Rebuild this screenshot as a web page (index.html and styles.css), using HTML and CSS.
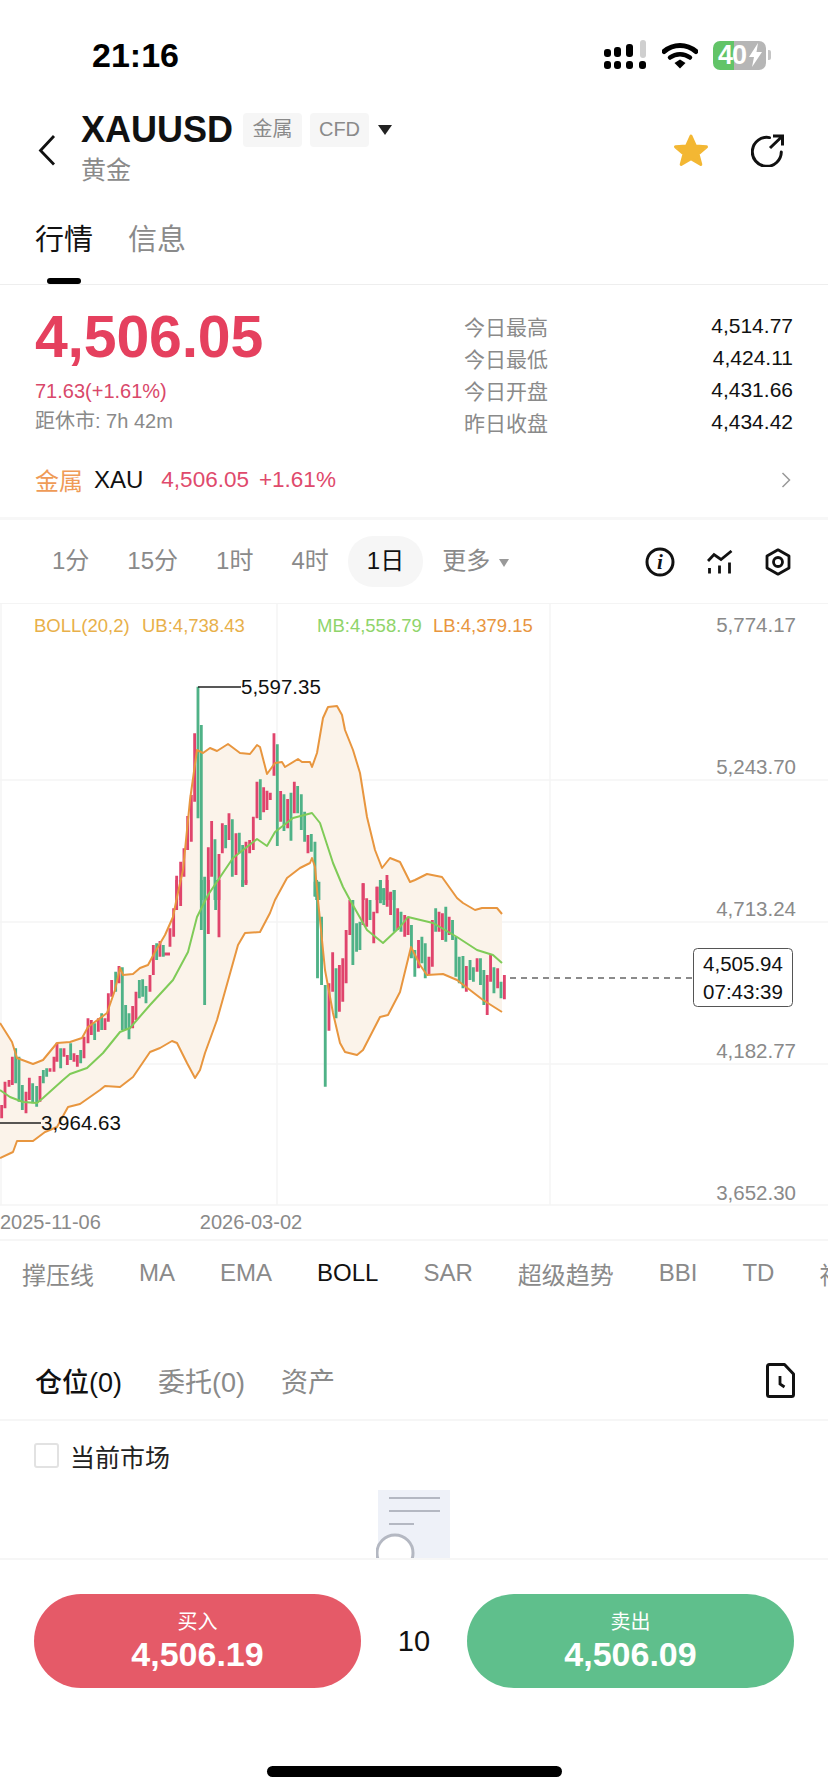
FILE: index.html
```html
<!DOCTYPE html>
<html lang="zh-CN">
<head>
    <meta charset="UTF-8">
    <meta name="viewport" content="width=device-width, initial-scale=1.0">
    <title>XAUUSD 黄金</title>
    <link rel="stylesheet" href="styles.css">
</head>
<body>
<div class="phone">
    <div class="status">
        <span class="time">21:16</span>
        <div class="status-icons">
            <svg class="signal" width="44" height="30" viewBox="0 0 44 30">
                <rect x="1" y="9" width="7" height="8" rx="3" fill="#000"/>
                <rect x="11" y="7" width="7" height="10" rx="3" fill="#000"/>
                <rect x="23" y="4" width="7" height="13" rx="3" fill="#000"/>
                <rect x="37" y="0" width="6" height="18" rx="3" fill="#cfcfcf"/>
                <rect x="1" y="21" width="7" height="8" rx="3" fill="#000"/>
                <rect x="11" y="21" width="7" height="8" rx="3" fill="#000"/>
                <rect x="23" y="21" width="7" height="8" rx="3" fill="#000"/>
                <rect x="36" y="21" width="7" height="8" rx="3" fill="#000"/>
            </svg>
            <svg class="wifi" width="36" height="27" viewBox="0 0 36 27">
                <path d="M2 9.5C11.500 1.500 24.500 1.500 34 9.500" fill="none" stroke="#000" stroke-width="5" stroke-linecap="round"/>
                <path d="M8 15.500C14 11 22 11 28 15.500" fill="none" stroke="#000" stroke-width="4.500" stroke-linecap="round"/>
                <path d="M12.500 21L18 17.500L23.500 21L18 26.500Z" fill="#000"/>
            </svg>
            <div class="battery">
                <span>40</span>
                <svg width="13" height="24" viewBox="0 0 13 24"><path d="M9 0L0 14H5L3 24L13 9H7.500Z" fill="#fff"/></svg>
            </div>
            <i class="battery-nub"></i>
        </div>
    </div>

    <div class="header">
        <svg class="back" width="18" height="32" viewBox="0 0 18 32">
            <path d="M16 2L2.500 16.500L16 30.500" fill="none" stroke="#111" stroke-width="2.800"/>
        </svg>
        <div class="title-col">
            <div class="title-row">
                <span class="symbol">XAUUSD</span>
                <span class="tag">金属</span>
                <span class="tag">CFD</span>
                <i class="caret"></i>
            </div>
            <div class="subtitle">黄金</div>
        </div>
        <div class="header-icons">
            <svg width="38" height="34" viewBox="0 0 38 34">
                <path d="M19 3L23.500 13L34.500 13.800L26 21L28.800 31.500L19 25.800L9.200 31.500L12 21L3.500 13.800L14.500 13Z" fill="#f3b733" stroke="#f3b733" stroke-width="3" stroke-linejoin="round"/>
            </svg>
            <svg width="33" height="33" viewBox="0 0 33 33">
                <path d="M18.500 3.600A14.500 14.500 0 1 0 30.300 18" fill="none" stroke="#111" stroke-width="3" stroke-linecap="round"/>
                <path d="M19 14L31 2.500M22 2H31.500V11.500" fill="none" stroke="#111" stroke-width="3"/>
            </svg>
        </div>
    </div>

    <div class="tabs">
        <div class="tab-list">
            <span class="tab tab-on">行情</span>
            <span class="tab">信息</span>
        </div>
        <div class="tab-mark"></div>
    </div>

    <div class="quote">
        <div class="quote-main">
            <div class="last-price">4,506.05</div>
            <div class="change">71.63(+1.61%)</div>
            <div class="countdown">距休市: 7h 42m</div>
        </div>
        <div class="stats">
            <div class="stat"><span class="stat-label">今日最高</span><span class="stat-value">4,514.77</span></div>
            <div class="stat"><span class="stat-label">今日最低</span><span class="stat-value">4,424.11</span></div>
            <div class="stat"><span class="stat-label">今日开盘</span><span class="stat-value">4,431.66</span></div>
            <div class="stat"><span class="stat-label">昨日收盘</span><span class="stat-value">4,434.42</span></div>
        </div>
    </div>

    <div class="metal">
        <span class="metal-name">金属</span>
        <span class="metal-code">XAU</span>
        <span class="metal-price">4,506.05</span>
        <span class="metal-pct">+1.61%</span>
        <svg class="metal-arrow" width="10" height="16" viewBox="0 0 10 16">
            <path d="M1.500 1L8.500 8L1.500 15" fill="none" stroke="#999" stroke-width="1.500"/>
        </svg>
    </div>

    <div class="periods">
        <span class="period">1分</span>
        <span class="period">15分</span>
        <span class="period">1时</span>
        <span class="period">4时</span>
        <span class="period period-on">1日</span>
        <span class="period period-more">更多<i class="more-caret"></i></span>
        <div class="tools">
            <svg width="30" height="30" viewBox="0 0 30 30">
                <circle cx="15" cy="15" r="13" fill="none" stroke="#111" stroke-width="3"/>
                <text class="info-i" x="15" y="22" text-anchor="middle">i</text>
            </svg>
            <svg width="26" height="24" viewBox="0 0 26 24">
                <path d="M1 11L7 4.500L14 9.500L24.500 1" fill="none" stroke="#111" stroke-width="2.800"/>
                <path d="M2.500 18V23.500M12.500 15.500V23.500M22.500 12.500V23.500" fill="none" stroke="#111" stroke-width="2.800"/>
            </svg>
            <svg width="26" height="28" viewBox="0 0 26 28">
                <path d="M13 1.800L24 8V20L13 26.200L2 20V8Z" fill="none" stroke="#111" stroke-width="2.800" stroke-linejoin="round"/>
                <circle cx="13" cy="14" r="4.500" fill="none" stroke="#111" stroke-width="2.800"/>
            </svg>
        </div>
    </div>

    <svg class="chart" width="828" height="602" viewBox="0 604 828 602">
        <!-- grid -->
        <path class="grid" d="M0 780H828M0 922H828M0 1064H828M0 1205H828M1 604V1205M277 604V1205M550 604V1205"/>
        <text class="watermark" x="325" y="942">Gate</text>

        <!-- bollinger band -->
        <path class="band" d="M0 1023L12 1042L17 1058L33 1064L43 1060L57 1043L70 1042L82 1038L88 1027L107 1013L115 990L120 968L123 975L133 974L140 968L148 965L155 952L165 935L173 917L177 897L183 870L190 800L197 750L203 753L210 748L217 751L228 744L240 753L250 754L257 745L260 747L267 774L275 763L282 762L285 767L298 759L302 762L310 762L312 767L317 753L323 718L328 707L337 706L342 715L345 730L353 750L360 773L367 817L375 850L382 868L390 858L400 862L410 882L415 880L427 874L442 877L457 898L463 903L475 910L482 908L497 908L502 914L502 1012L483 1000L470 990L457 980L443 974L427 975L420 965L411 947L400 992L388 1015L380 1017L363 1050L357 1055L345 1052L340 1043L333 1013L325 970L318 900L315 867L312 858L310 863L300 868L287 878L275 900L270 913L260 932L245 933L238 945L217 1020L205 1053L200 1070L195 1078L187 1063L177 1043L172 1041L160 1048L150 1052L133 1077L120 1087L105 1086L100 1090L80 1104L68 1107L57 1127L45 1132L33 1141L17 1141L13 1152L0 1158Z"/>

        <!-- candles below y 880, left part -->
        <g transform="translate(0,880) scale(.3333)">
            <path class="up" d="M5 675V715M15 605V685M27 600V620M37 530V615M78 635V700M88 593V660M120 588V665M150 565V575M162 530V575M171 488V545M192 505V530M202 525V555M222 520V545M232 525V560M252 470V535M264 415V490M274 420V465M295 415V455M315 415V450M325 340V425M335 300V350M357 258V310M398 378V445M408 335V420M450 285V335M460 195V285M480 183V230M492 222H510M510 145V200M521 85V170M530 0V90M542 0V78M625 0V162M657 0V172M738 0V15"/>
            <path class="down" d="M47 505V610M57 530V665M67 615V690M98 610V670M110 618V680M130 570V610M140 565V590M182 505V565M212 490V540M242 510V550M284 430V480M305 400V450M347 275V335M367 262V450M377 375V450M387 400V478M418 300V355M428 298V350M438 318V370M470 190V240M490 195V230M604 0V150M614 60V375M647 0V90M728 0V20"/>
        </g>
        <!-- candles above y 900 -->
        <g transform="translate(0,650) scale(.3333)">
            <path class="up" d="M530 677V750M542 635V750M552 595V680M563 498V600M574 435V575M584 250V455M625 592V750M635 513V680M657 612V750M667 520V610M687 490V570M708 550V675M738 575V700M749 570V610M760 500V600M771 395V505M791 412V487M801 422V480M811 428V450M822 250V377M842 423V515M863 447V535M883 395V490M924 555V610M1090 700V750M1131 710V750M1161 675V750M1171 730V750"/>
            <path class="down" d="M594 110V505M604 225V750M614 680V750M645 568V750M677 525V595M697 508V680M718 548V610M728 585V710M781 388V510M832 283V588M852 433V543M873 428V572M893 408V490M904 433V540M914 485V575M934 552V605M945 575V740M950 690V750M957 695V750M1141 690V750M1151 715V750M1182 720V750"/>
        </g>
        <!-- candles below y 880, right part -->
        <g transform="translate(300,880) scale(.3367,.3333)">
            <path class="up" d="M86 310V452M97 217V335M117 255V395M127 235V365M137 150V310M148 60V165M187 10V135M198 55V140M219 95V190M229 20V100M259 0V80M269 35V105M290 85V150M311 105V170M321 110V165M352 180V265M383 230V285M393 120V260M413 95V155M423 100V180M443 110V165M494 258V335M526 235V275M556 285V405M566 222V305M587 265V325M607 285V358"/>
            <path class="down" d="M45 5V48M52 5V295M64 110V315M75 315V620M107 265V415M157 60V255M168 130V215M178 125V210M208 60V120M239 0V70M249 25V75M280 30V155M300 95V155M331 135V235M341 210V290M362 170V250M372 190V295M403 85V155M433 80V185M453 120V180M463 170V290M473 230V310M484 228V325M505 240V300M515 262V305M536 235V315M546 270V375M576 262V340M597 305V355"/>
        </g>

        <!-- band lines -->
        <path class="band-line" d="M0 1023L12 1042L17 1058L33 1064L43 1060L57 1043L70 1042L82 1038L88 1027L107 1013L115 990L120 968L123 975L133 974L140 968L148 965L155 952L165 935L173 917L177 897L183 870L190 800L197 750L203 753L210 748L217 751L228 744L240 753L250 754L257 745L260 747L267 774L275 763L282 762L285 767L298 759L302 762L310 762L312 767L317 753L323 718L328 707L337 706L342 715L345 730L353 750L360 773L367 817L375 850L382 868L390 858L400 862L410 882L415 880L427 874L442 877L457 898L463 903L475 910L482 908L497 908L502 914"/>
        <path class="band-line" d="M502 1012L483 1000L470 990L457 980L443 974L427 975L420 965L411 947L400 992L388 1015L380 1017L363 1050L357 1055L345 1052L340 1043L333 1013L325 970L318 900L315 867L312 858L310 863L300 868L287 878L275 900L270 913L260 932L245 933L238 945L217 1020L205 1053L200 1070L195 1078L187 1063L177 1043L172 1041L160 1048L150 1052L133 1077L120 1087L105 1086L100 1090L80 1104L68 1107L57 1127L45 1132L33 1141L17 1141L13 1152L0 1158"/>
        <path class="mid-line" d="M0 1090L10 1097L23 1102L37 1103L43 1098L63 1080L70 1074L87 1068L103 1053L120 1032L130 1028L150 1005L173 980L188 952L197 917L208 895L233 858L257 839L267 846L275 832L293 818L312 813L320 823L333 863L343 887L350 900L367 930L383 943L400 927L408 917L433 923L457 937L477 950L493 955L502 963"/>

        <!-- high and low marks -->
        <path class="mark" d="M198 687H241M0 1123H41"/>
        <text class="mark-text" x="241" y="694">5,597.35</text>
        <text class="mark-text" x="41" y="1130">3,964.63</text>

        <!-- legend -->
        <text class="legend legend-boll" x="34" y="632">BOLL(20,2)</text>
        <text class="legend legend-boll" x="142" y="632">UB:4,738.43</text>
        <text class="legend legend-mb" x="317" y="632">MB:4,558.79</text>
        <text class="legend legend-lb" x="433" y="632">LB:4,379.15</text>

        <!-- price axis -->
        <text class="axis" x="796" y="632">5,774.17</text>
        <text class="axis" x="796" y="774">5,243.70</text>
        <text class="axis" x="796" y="916">4,713.24</text>
        <text class="axis" x="796" y="1058">4,182.77</text>
        <text class="axis" x="796" y="1200">3,652.30</text>

        <!-- last price -->
        <path class="last-line" d="M510 978H694"/>
        <rect class="last-box" x="693.500" y="948.500" width="99" height="58" rx="4"/>
        <text class="last-text" x="743" y="971">4,505.94</text>
        <text class="last-text" x="743" y="999">07:43:39</text>
    </svg>

    <div class="dates">
        <span>2025-11-06</span>
        <span>2026-03-02</span>
    </div>

    <div class="indicators">
        <span>撑压线</span>
        <span>MA</span>
        <span>EMA</span>
        <span class="indicator-on">BOLL</span>
        <span>SAR</span>
        <span>超级趋势</span>
        <span>BBI</span>
        <span>TD</span>
        <span>神奇九转</span>
    </div>

    <div class="orders">
        <span class="order-tab order-on">仓位(0)</span>
        <span class="order-tab">委托(0)</span>
        <span class="order-tab">资产</span>
        <svg class="history" width="29" height="35" viewBox="0 0 29 35">
            <path d="M1.500 3.500Q1.500 1.500 3.500 1.500H18.500L27.500 11V31.500Q27.500 33.500 25.500 33.500H3.500Q1.500 33.500 1.500 31.500Z" fill="none" stroke="#111" stroke-width="3" stroke-linejoin="round"/>
            <path d="M14 13V21L18.500 24" fill="none" stroke="#111" stroke-width="2.800"/>
        </svg>
    </div>

    <div class="filter">
        <span class="checkbox"></span>
        <span class="filter-text">当前市场</span>
    </div>

    <div class="empty">
        <svg width="76" height="76" viewBox="0 0 76 76">
            <rect x="2" y="0" width="72" height="76" fill="#eef1f8"/>
            <path d="M13 8H64M13 21H64M13 34H38" stroke="#b4b8c2" stroke-width="2" fill="none"/>
            <circle cx="19" cy="63" r="18" fill="#fff" stroke="#b4b8c2" stroke-width="3"/>
        </svg>
    </div>

    <div class="footer">
        <div class="trade">
            <button class="trade-btn buy"><span class="trade-label">买入</span><span class="trade-price">4,506.19</span></button>
            <span class="lots">10</span>
            <button class="trade-btn sell"><span class="trade-label">卖出</span><span class="trade-price">4,506.09</span></button>
        </div>
        <div class="home-bar"></div>
    </div>
</div>
</body>
</html>
```

FILE: styles.css
```css
* {
    box-sizing: border-box;
}
body {
    margin: 0;
    background: #fff;
    font-family: "Liberation Sans", "Noto Sans CJK SC", sans-serif;
    color: #111;
}
.phone {
    width: 828px;
    height: 1792px;
    overflow: hidden;
    display: flex;
    flex-direction: column;
}

/* status bar */
.status {
    height: 110px;
    flex: none;
    display: flex;
    align-items: center;
    justify-content: space-between;
    padding: 0 57px 0 92px;
}
.time {
    font-size: 34px;
    font-weight: bold;
    color: #000;
}
.status-icons {
    display: flex;
    align-items: center;
}
.signal {
    margin-right: 15px;
}
.wifi {
    margin-right: 15px;
}
.battery {
    width: 53px;
    height: 29px;
    border-radius: 7px;
    background: linear-gradient(90deg, #62c468 40%, #b6b6b6 40%);
    display: flex;
    align-items: center;
    padding-left: 5px;
    color: #fff;
    font-size: 27px;
    font-weight: bold;
    letter-spacing: -1px;
}
.battery svg {
    margin-left: 3px;
}
.battery-nub {
    width: 3px;
    height: 10px;
    margin-left: 2px;
    border-radius: 0 2px 2px 0;
    background: #c4c4c4;
}

/* header */
.header {
    height: 80px;
    flex: none;
    display: flex;
    align-items: center;
    padding: 0 44px 0 38px;
}
.back {
    margin-right: 25px;
}
.title-col {
    display: flex;
    flex-direction: column;
    gap: 6px;
}
.title-row {
    height: 34px;
    display: flex;
    align-items: center;
}
.symbol {
    font-size: 36px;
    font-weight: bold;
    margin-right: 10px;
}
.tag {
    width: 59px;
    height: 34px;
    line-height: 32px;
    margin-right: 8px;
    text-align: center;
    background: #f6f6f6;
    border-radius: 4px;
    color: #8a8a8a;
    font-size: 20px;
}
.caret {
    margin-left: 1px;
    border-left: 7.5px solid transparent;
    border-right: 7.5px solid transparent;
    border-top: 10px solid #222;
}
.subtitle {
    height: 34px;
    line-height: 34px;
    font-size: 25px;
    color: #8a8a8a;
}
.header-icons {
    margin-left: auto;
    display: flex;
    align-items: center;
    gap: 41px;
}

/* tabs */
.tabs {
    height: 95px;
    flex: none;
    padding-top: 30px;
    border-bottom: 1px solid #eee;
}
.tab-list {
    display: flex;
    gap: 35px;
    padding-left: 35px;
    height: 40px;
}
.tab {
    font-size: 29px;
    line-height: 40px;
    color: #8a8a8a;
}
.tab-on {
    color: #111;
}
.tab-mark {
    width: 34px;
    height: 6px;
    margin: 18px 0 0 47px;
    border-radius: 3px;
    background: #000;
}

/* quote */
.quote {
    height: 163px;
    flex: none;
    display: flex;
    justify-content: space-between;
    padding: 0 35px;
}
.last-price {
    margin-top: 22px;
    font-size: 59px;
    line-height: 60px;
    font-weight: bold;
    color: #e5405e;
    letter-spacing: -.2px;
}
.change {
    margin-top: 10px;
    font-size: 20px;
    line-height: 28px;
    color: #d9486a;
}
.countdown {
    margin-top: 2px;
    font-size: 20px;
    line-height: 28px;
    color: #8a8a8a;
}
.stats {
    width: 329px;
    padding-top: 25px;
}
.stat {
    height: 32px;
    display: flex;
    align-items: center;
    justify-content: space-between;
}
.stat-label {
    font-size: 21px;
    color: #8a8a8a;
}
.stat-value {
    font-size: 21px;
    color: #111;
}

/* metal row */
.metal {
    height: 72px;
    flex: none;
    display: flex;
    align-items: center;
    padding: 0 37px 6px 35px;
    border-bottom: 3px solid #f7f7f7;
}
.metal-name {
    font-size: 24px;
    color: #ef9b57;
    margin-right: 11px;
}
.metal-code {
    font-size: 24px;
    color: #111;
    margin-right: 18px;
}
.metal-price {
    font-size: 22.500px;
    color: #df4a6c;
    margin-right: 10px;
}
.metal-pct {
    font-size: 22.500px;
    color: #df4a6c;
}
.metal-arrow {
    margin-left: auto;
}

/* periods */
.periods {
    height: 84px;
    flex: none;
    display: flex;
    align-items: center;
    padding: 0 37px 0 33px;
    border-bottom: 1px solid #f4f4f4;
}
.period {
    height: 51px;
    line-height: 50px;
    padding: 0 19px;
    font-size: 24px;
    color: #8a8a8a;
    border-radius: 25px;
    white-space: nowrap;
}
.period-on {
    color: #111;
    background: #f6f6f6;
}
.more-caret {
    display: inline-block;
    margin-left: 9px;
    vertical-align: 2px;
    border-left: 5.500px solid transparent;
    border-right: 5.500px solid transparent;
    border-top: 8px solid #999;
}
.tools {
    margin-left: auto;
    display: flex;
    align-items: center;
    gap: 32px;
}
.info-i {
    font-family: "Liberation Serif", serif;
    font-style: italic;
    font-weight: bold;
    font-size: 21px;
    fill: #111;
}

/* chart */
.chart {
    display: block;
    flex: none;
}
.grid {
    fill: none;
    stroke: #f5f5f5;
    stroke-width: 1.500;
}
.watermark {
    font-size: 62px;
    font-weight: bold;
    fill: #f3ebe1;
    letter-spacing: 8px;
}
.band {
    fill: #fbf3ea;
}
.band-line {
    fill: none;
    stroke: #e8963f;
    stroke-width: 2;
    stroke-linejoin: round;
}
.mid-line {
    fill: none;
    stroke: #7fcb58;
    stroke-width: 2;
    stroke-linejoin: round;
}
.up,
.down {
    fill: none;
    stroke-width: 8.500;
}
.up {
    stroke: #e0446c;
}
.down {
    stroke: #4fb287;
}
.mark {
    fill: none;
    stroke: #222;
    stroke-width: 1.500;
}
.mark-text {
    font-size: 20.500px;
    fill: #111;
}
.legend {
    font-size: 18.500px;
}
.legend-boll {
    fill: #e8b04a;
}
.legend-mb {
    fill: #8fd46a;
}
.legend-lb {
    fill: #e8963f;
}
.axis {
    font-size: 20.500px;
    fill: #8a8a8a;
    text-anchor: end;
}
.last-line {
    fill: none;
    stroke: #666;
    stroke-width: 1.500;
    stroke-dasharray: 6 5;
}
.last-box {
    fill: #fff;
    stroke: #555;
    stroke-width: 1;
}
.last-text {
    font-size: 20.500px;
    fill: #111;
    text-anchor: middle;
}

/* below the chart */
.dates {
    height: 35px;
    flex: none;
    display: flex;
    gap: 99px;
    align-items: center;
    font-size: 20px;
    color: #8a8a8a;
    border-bottom: 2px solid #f6f6f6;
}
.indicators {
    height: 64px;
    flex: none;
    display: flex;
    align-items: center;
    gap: 45px;
    padding-left: 22px;
    font-size: 24px;
    color: #8a8a8a;
    white-space: nowrap;
    overflow: hidden;
}
.indicator-on {
    color: #111;
}
.orders {
    height: 116px;
    flex: none;
    display: flex;
    align-items: center;
    gap: 36px;
    padding: 36px 33px 0 35px;
    border-bottom: 2px solid #f6f6f6;
}
.order-tab {
    font-size: 27px;
    color: #8a8a8a;
}
.order-on {
    color: #111;
    font-weight: 500;
}
.history {
    margin-left: auto;
}
.filter {
    height: 69px;
    flex: none;
    display: flex;
    align-items: center;
    padding: 0 0 0 34px;
}
.checkbox {
    width: 25px;
    height: 25px;
    border: 2px solid #e2e2e2;
    border-radius: 3px;
    margin-right: 11px;
}
.filter-text {
    font-size: 25px;
    color: #222;
}
.empty {
    flex: 1;
    overflow: hidden;
    display: flex;
    justify-content: center;
}

/* footer */
.footer {
    height: 234px;
    flex: none;
    padding-top: 34px;
    border-top: 2px solid #f6f6f6;
}
.trade {
    display: flex;
    align-items: center;
    justify-content: space-between;
    padding: 0 34px;
}
.trade-btn {
    width: 327px;
    height: 94px;
    border: none;
    border-radius: 47px;
    display: flex;
    flex-direction: column;
    align-items: center;
    justify-content: center;
    color: #fff;
    font-family: inherit;
}
.buy {
    background: #e55a68;
}
.sell {
    background: #5fbf8c;
}
.trade-label {
    font-size: 20px;
    line-height: 26px;
}
.trade-price {
    font-size: 34px;
    line-height: 39px;
    font-weight: bold;
}
.lots {
    font-size: 29px;
    color: #111;
}
.home-bar {
    width: 295px;
    height: 11px;
    margin: 78px auto 0;
    border-radius: 6px;
    background: #000;
}
```
